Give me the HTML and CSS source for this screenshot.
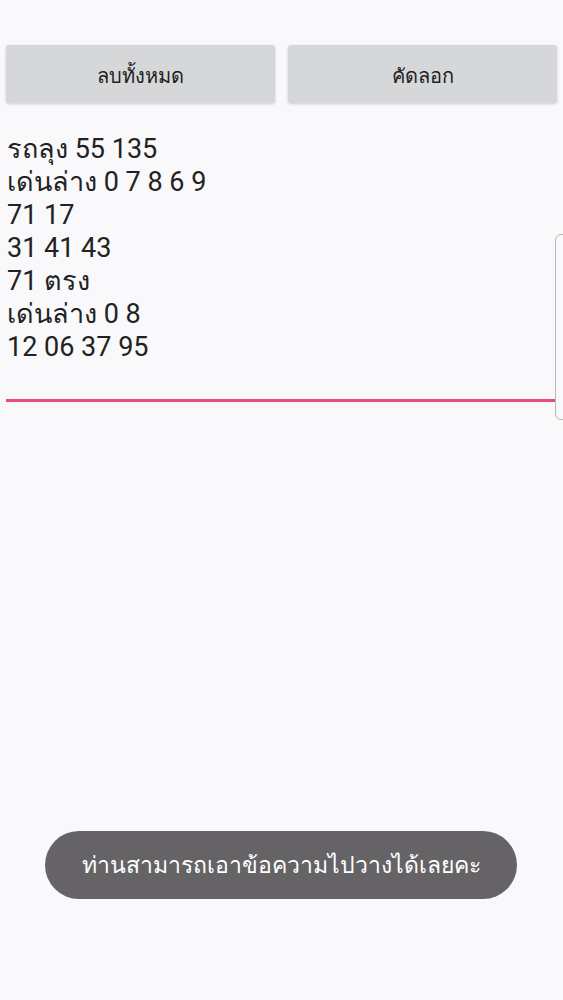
FILE: index.html
```
<!DOCTYPE html>
<html lang="th">
<head>
    <meta charset="UTF-8">
    <meta name="viewport" content="width=device-width, initial-scale=1.0">
    <title>คัดลอก</title>
    <link rel="stylesheet" href="styles.css">
</head>
<body>

<div class="status-bar">
    <div class="status-left">
        <span class="dot"></span><span class="dot"></span><span class="dot"></span>
    </div>
    <div class="status-right">
        <span class="bar"></span><span class="bar"></span><span class="bar"></span><span class="bar"></span>
    </div>
</div>

<div class="button-row">
    <button class="action-btn">ลบทั้งหมด</button>
    <button class="action-btn">คัดลอก</button>
</div>

<div class="editor">
    <div class="editor-text">รถลุง 55 135
เด่นล่าง 0 7 8 6 9
71 17
31 41 43
71 ตรง
เด่นล่าง 0 8
12 06 37 95</div>
    <div class="editor-line"></div>
    <div class="edge-handle"></div>
</div>

<div class="toast">ท่านสามารถเอาข้อความไปวางได้เลยคะ</div>

</body>
</html>
```

FILE: styles.css
```
body {
    margin: 0;
    padding: 0;
    background-color: #f9f8fb;
    font-family: Roboto, "Noto Sans", sans-serif;
    color: #212121;
    height: 1000px;
    overflow: hidden;
    position: relative;
}
.status-bar {
    height: 36px;
    display: flex;
    justify-content: space-between;
    align-items: center;
    padding: 0 24px 0 8px;
    opacity: 0.3;
}
.status-left, .status-right {
    display: flex;
    gap: 8px;
}
.dot {
    width: 8px;
    height: 8px;
    background-color: #ffffff;
    border-radius: 2px;
}
.bar {
    width: 12px;
    height: 12px;
    background-color: #ffffff;
}
.button-row {
    display: flex;
    gap: 13px;
    padding: 9px 6px 0 6px;
}
.action-btn {
    flex: 1;
    height: 58px;
    padding-top: 4px;
    background-color: #d6d7d8;
    border: none;
    border-radius: 3px;
    box-shadow: 0 1px 3px rgba(0, 0, 0, 0.18);
    font-family: Roboto, "Noto Sans", sans-serif;
    font-size: 20px;
    color: #222222;
}
.editor {
    position: relative;
    padding: 0 8px 0 6px;
    margin-top: 30px;
}
.editor-text {
    white-space: pre;
    font-size: 27px;
    line-height: 33px;
    color: #222222;
    padding-left: 1px;
}
.editor-line {
    margin-top: 35px;
    height: 3px;
    background-color: #e84a80;
}
.edge-handle {
    position: absolute;
    right: -6px;
    top: 101px;
    width: 12px;
    height: 184px;
    border: 1px solid #b8b8b8;
    border-radius: 6px;
    background-color: #f9f8fb;
}
.toast {
    position: absolute;
    left: 45px;
    top: 831px;
    width: 472px;
    height: 68px;
    border-radius: 34px;
    background-color: #656366;
    color: #ffffff;
    font-size: 23px;
    display: flex;
    align-items: center;
    justify-content: center;
}
```
